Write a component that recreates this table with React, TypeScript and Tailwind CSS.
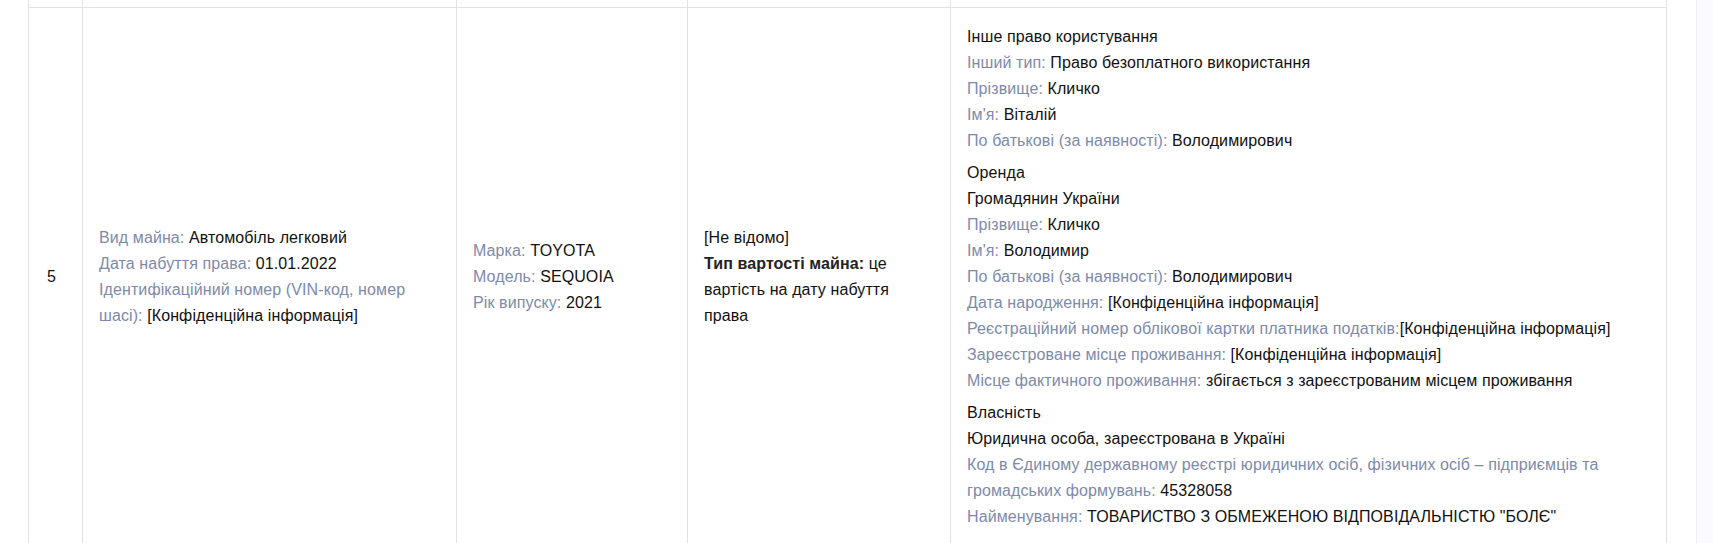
import React from 'react';

type Line = { label?: string; value?: string };

const Field: React.FC<Line> = ({ label, value }) => (
  <div>
    {label && <span className="text-[#7d8aab]">{label}</span>}
    {value && <span className="text-[#111]">{value}</span>}
  </div>
);

const groups: Line[][] = [
  [
    { value: 'Інше право користування' },
    { label: 'Інший тип: ', value: 'Право безоплатного використання' },
    { label: 'Прізвище: ', value: 'Кличко' },
    { label: "Ім'я: ", value: 'Віталій' },
    { label: 'По батькові (за наявності): ', value: 'Володимирович' },
  ],
  [
    { value: 'Оренда' },
    { value: 'Громадянин України' },
    { label: 'Прізвище: ', value: 'Кличко' },
    { label: "Ім'я: ", value: 'Володимир' },
    { label: 'По батькові (за наявності): ', value: 'Володимирович' },
    { label: 'Дата народження: ', value: '[Конфіденційна інформація]' },
    { label: 'Реєстраційний номер облікової картки платника податків:', value: '[Конфіденційна інформація]' },
    { label: 'Зареєстроване місце проживання: ', value: '[Конфіденційна інформація]' },
    { label: 'Місце фактичного проживання: ', value: 'збігається з зареєстрованим місцем проживання' },
  ],
  [
    { value: 'Власність' },
    { value: 'Юридична особа, зареєстрована в Україні' },
    {
      label: 'Код в Єдиному державному реєстрі юридичних осіб, фізичних осіб – підприємців та громадських формувань: ',
      value: '45328058',
    },
    { label: 'Найменування: ', value: 'ТОВАРИСТВО З ОБМЕЖЕНОЮ ВІДПОВІДАЛЬНІСТЮ "БОЛЄ"' },
  ],
];

const cell = 'border border-[#e2e2e9] align-middle px-4';

export default function App() {
  return (
    <div
      className="flex h-[543px] w-full overflow-hidden bg-white text-[16px] leading-[26px] tracking-[0.1px] text-[#111]"
      style={{ fontFamily: '"Liberation Sans", Arial, sans-serif' }}
    >
      <div className="flex-1 pl-[28px]">
        <table className="border-collapse table-fixed w-[1638px]">
          <colgroup>
            <col className="w-[54px]" />
            <col className="w-[374px]" />
            <col className="w-[231px]" />
            <col className="w-[263px]" />
            <col className="w-[716px]" />
          </colgroup>
          <tbody>
            <tr className="h-[7px]">
              <td className={`${cell} border-t-0 p-0`} />
              <td className={`${cell} border-t-0 p-0`} />
              <td className={`${cell} border-t-0 p-0`} />
              <td className={`${cell} border-t-0 p-0`} />
              <td className={`${cell} border-t-0 p-0`} />
            </tr>
            <tr>
              <td className={`${cell} pl-[18px] pr-2`}>5</td>
              <td className={cell}>
                <Field label="Вид майна: " value="Автомобіль легковий" />
                <Field label="Дата набуття права: " value="01.01.2022" />
                <Field label="Ідентифікаційний номер (VIN-код, номер шасі): " value="[Конфіденційна інформація]" />
              </td>
              <td className={cell}>
                <Field label="Марка: " value="TOYOTA" />
                <Field label="Модель: " value="SEQUOIA" />
                <Field label="Рік випуску: " value="2021" />
              </td>
              <td className={cell}>
                <div>[Не відомо]</div>
                <div>
                  <span className="font-bold text-[#222]">Тип вартості майна:</span> це вартість на дату набуття права
                </div>
              </td>
              <td className={`${cell} pt-4 pb-4`}>
                {groups.map((g, i) => (
                  <div key={i} className={i > 0 ? 'mt-[6px]' : ''}>
                    {g.map((l, j) => (
                      <Field key={j} {...l} />
                    ))}
                  </div>
                ))}
              </td>
            </tr>
          </tbody>
        </table>
      </div>
      <div className="w-[17px] shrink-0 border-l border-[#eef0f6] bg-[#fbfbfd]" />
    </div>
  );
}
